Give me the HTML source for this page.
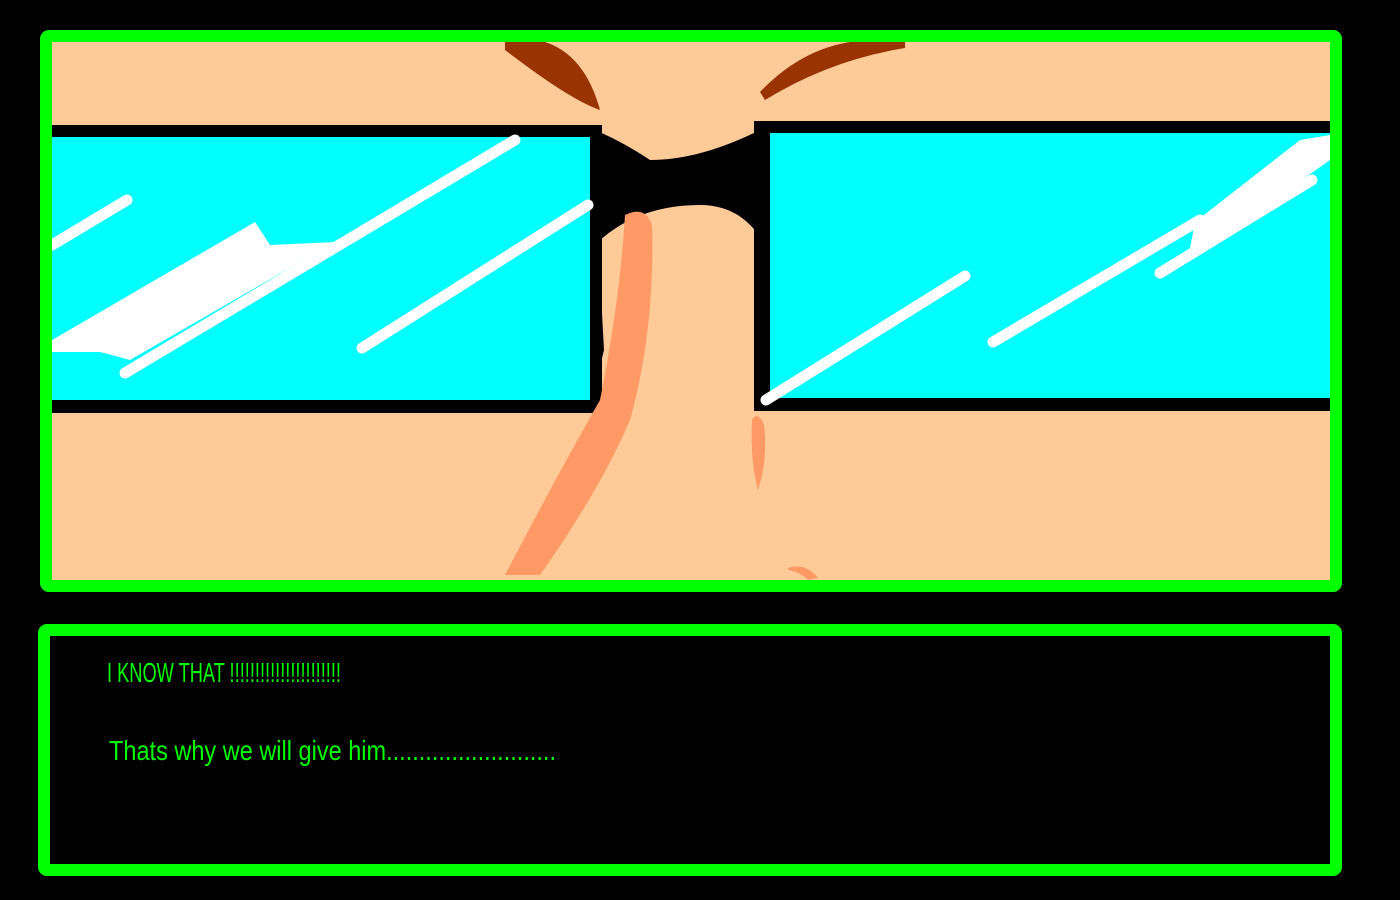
<!DOCTYPE html>
<html><head><style>html,body{margin:0;padding:0;background:#000;width:1400px;height:900px;overflow:hidden}</style></head><body>
<svg width="1400" height="900" viewBox="0 0 1400 900" xmlns="http://www.w3.org/2000/svg">
<rect width="1400" height="900" fill="#000"/>
<rect x="46" y="36" width="1290" height="550" fill="#fecb98"/>
<!-- eyebrows -->
<path d="M505 42 L545 42 Q585 55 600 110 Q570 100 505 50 Z" fill="#993300"/>
<path d="M760 92 Q800 50 850 42 L905 42 L905 48 Q830 60 765 100 Z" fill="#993300"/>
<!-- left lens -->
<rect x="46" y="125" width="556" height="288" fill="#000"/>
<rect x="52" y="137" width="538" height="263" fill="#00ffff"/>
<!-- right lens -->
<rect x="754" y="121" width="582" height="290" fill="#000"/>
<rect x="770" y="133" width="560" height="265" fill="#00ffff"/>
<!-- bridge -->
<path d="M590 128 Q620 140 650 160 Q700 160 760 130 L762 240 Q740 205 700 205 Q640 205 600 240 Z" fill="#000"/>
<path d="M598 240 L604 350 L592 400 L598 240 Z" fill="#000"/>
<!-- nose -->
<path d="M625 215 Q645 205 652 225 Q655 330 630 420 Q600 490 540 575 L505 575 Q560 470 600 400 Q620 300 625 215 Z" fill="#ff9966"/>
<path d="M752 420 Q758 410 764 425 Q768 460 758 490 Q750 460 752 420 Z" fill="#ff9966"/>
<path d="M788 568 Q805 562 818 578 L808 580 Q800 572 788 570 Z" fill="#ff9966"/>
<!-- glare lines left -->
<g stroke="#fff" stroke-width="11" stroke-linecap="round" fill="none">
<line x1="52" y1="245" x2="127" y2="200"/>
<line x1="125" y1="373" x2="515" y2="140"/>
<line x1="362" y1="348" x2="588" y2="205"/>
<line x1="766" y1="400" x2="965" y2="276"/>
<line x1="993" y1="342" x2="1200" y2="220"/>
<line x1="1160" y1="273" x2="1312" y2="180"/>
</g>
<path d="M52 340 L255 222 L270 245 L335 242 L130 360 L100 352 L52 352 Z" fill="#fff"/>
<path d="M1195 222 L1300 140 L1330 135 L1330 160 L1210 245 L1190 248 Z" fill="#fff"/>
<!-- frames -->
<rect x="46" y="36" width="1290" height="550" fill="none" stroke="#00ff00" stroke-width="12" rx="3"/>
<rect x="44" y="630" width="1292" height="240" fill="none" stroke="#00ff00" stroke-width="12" rx="3"/>
<g fill="#00ff00" font-family="Liberation Sans Narrow, Liberation Sans, sans-serif" font-size="28">
<text x="107" y="682" textLength="234" lengthAdjust="spacingAndGlyphs">I KNOW THAT !!!!!!!!!!!!!!!!!!!!!!</text>
<text x="109" y="760" textLength="447" lengthAdjust="spacingAndGlyphs">Thats why we will give him..........................</text>
</g>
</svg>
</body></html>
